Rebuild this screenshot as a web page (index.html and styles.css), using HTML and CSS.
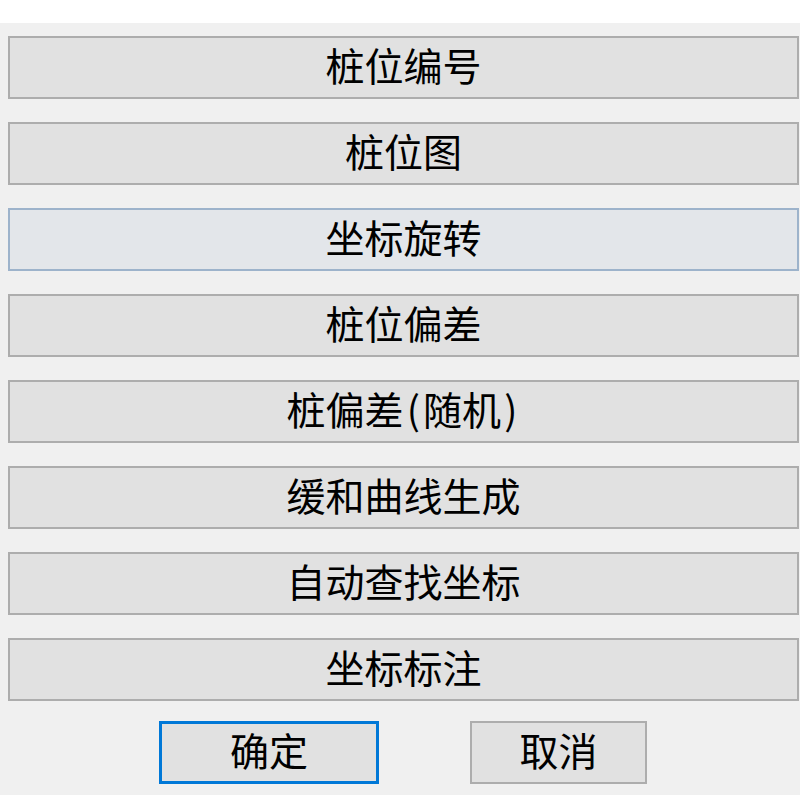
FILE: index.html
```html
<!DOCTYPE html>
<html lang="zh-CN">
<head>
<meta charset="utf-8">
<title>桩位工具</title>
<link rel="stylesheet" href="styles.css">
</head>
<body>
<div class="top-strip"></div>
<div class="dialog">
  <div class="list">
    <div class="btn">桩位编号</div>
    <div class="btn">桩位图</div>
    <div class="btn hover">坐标旋转</div>
    <div class="btn">桩位偏差</div>
    <div class="btn">桩偏差<span class="paren">(</span>随机<span class="paren">)</span></div>
    <div class="btn">缓和曲线生成</div>
    <div class="btn">自动查找坐标</div>
    <div class="btn">坐标标注</div>
  </div>
  <div class="actions">
    <div class="btn ok">确定</div>
    <div class="btn cancel">取消</div>
  </div>
</div>
<div class="bottom-strip"></div>
</body>
</html>
```
FILE: styles.css
```css
html, body {
  margin: 0;
  padding: 0;
  background: #ffffff;
}
body {
  width: 800px;
  height: 800px;
  overflow: hidden;
  font-family: "Noto Sans CJK SC", "Noto Sans", sans-serif;
}
.top-strip {
  height: 23px;
  background: #ffffff;
}
.dialog {
  height: 772px;
  box-sizing: border-box;
  background: #f0f0f0;
  padding: 13px 1px 0 8px;
}
.list {
  display: flex;
  flex-direction: column;
  gap: 23px;
}
.btn {
  box-sizing: border-box;
  height: 63px;
  border: 2px solid #adadad;
  background: #e1e1e1;
  color: #000;
  font-size: 39px;
  line-height: 1;
  display: flex;
  align-items: center;
  justify-content: center;
  padding-bottom: 6px;
}
.btn.hover {
  background: #e3e6ea;
  border-color: #9db3cb;
}
.paren {
  display: inline-block;
  width: 0.5em;
  text-align: center;
}
.actions {
  display: flex;
  margin-top: 20px;
  padding-left: 151px;
  gap: 91px;
}
.btn.ok {
  width: 220px;
  border: 3px solid #0078d7;
}
.btn.cancel {
  width: 177px;
}
.bottom-strip {
  height: 5px;
  background: #ffffff;
}
```
